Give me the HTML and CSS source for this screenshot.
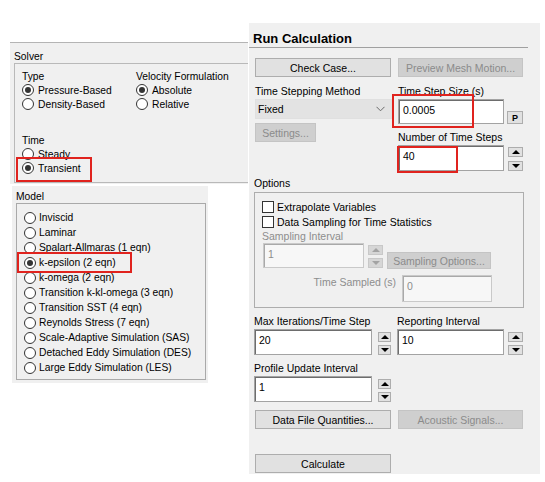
FILE: index.html
```html
<!DOCTYPE html>
<html>
<head>
<meta charset="utf-8">
<title>Run Calculation</title>
<link rel="stylesheet" href="styles.css">
</head>
<body>
<div class="canvas">

  <section class="panel solver">
    <div class="cap">Solver</div>
    <div class="group solver-group">
      <div class="cols">
        <div class="col col-type">
          <div class="lbl">Type</div>
          <div class="opt"><span class="rb on"></span>Pressure-Based</div>
          <div class="opt"><span class="rb"></span>Density-Based</div>
        </div>
        <div class="col">
          <div class="lbl">Velocity Formulation</div>
          <div class="opt"><span class="rb on"></span>Absolute</div>
          <div class="opt"><span class="rb"></span>Relative</div>
        </div>
      </div>
      <div class="lbl time-lbl">Time</div>
      <div class="opt"><span class="rb"></span>Steady</div>
      <div class="opt"><span class="rb on"></span>Transient</div>
    </div>
    <div class="mark mark-transient"></div>
  </section>

  <section class="panel model">
    <div class="cap">Model</div>
    <div class="group model-group">
      <div class="opt"><span class="rb"></span>Inviscid</div>
      <div class="opt"><span class="rb"></span>Laminar</div>
      <div class="opt"><span class="rb"></span>Spalart-Allmaras (1 eqn)</div>
      <div class="opt"><span class="rb on"></span>k-epsilon (2 eqn)</div>
      <div class="opt"><span class="rb"></span>k-omega (2 eqn)</div>
      <div class="opt"><span class="rb"></span>Transition k-kl-omega (3 eqn)</div>
      <div class="opt"><span class="rb"></span>Transition SST (4 eqn)</div>
      <div class="opt"><span class="rb"></span>Reynolds Stress (7 eqn)</div>
      <div class="opt"><span class="rb"></span>Scale-Adaptive Simulation (SAS)</div>
      <div class="opt"><span class="rb"></span>Detached Eddy Simulation (DES)</div>
      <div class="opt"><span class="rb"></span>Large Eddy Simulation (LES)</div>
    </div>
    <div class="mark mark-keps"></div>
  </section>

  <section class="panel rc">
    <h1 class="rc-title">Run Calculation</h1>
    <div class="rc-body">
      <div class="btnrow top-btns">
        <div class="btn">Check Case...</div>
        <div class="btn dis">Preview Mesh Motion...</div>
      </div>

      <div class="pair">
        <div class="pcol">
          <div class="lbl">Time Stepping Method</div>
          <div class="select"><span>Fixed</span>
            <svg class="chev" width="9" height="6" viewBox="0 0 9 6"><polyline points="0.5,0.8 4.5,4.8 8.5,0.8" fill="none" stroke="#6a6a6a" stroke-width="1"/></svg>
          </div>
          <div class="btn dis settings">Settings...</div>
        </div>
        <div class="pcol">
          <div class="lbl">Time Step Size (s)</div>
          <div class="frow">
            <div class="inp w106 h25">0.0005</div>
            <div class="btn pbtn">P</div>
          </div>
          <div class="lbl gap7">Number of Time Steps</div>
          <div class="frow">
            <div class="inp w106 h26">40</div>
            <div class="spin s15 ml4"><span class="sb up"></span><span class="sb down"></span></div>
          </div>
        </div>
      </div>

      <div class="lbl opt-cap">Options</div>
      <div class="group options">
        <div class="chk"><span class="cb"></span>Extrapolate Variables</div>
        <div class="chk"><span class="cb"></span>Data Sampling for Time Statistics</div>
        <div class="lbl dis-t samp-lbl">Sampling Interval</div>
        <div class="samp">
          <div class="inp dinp samp-inp">1</div>
          <div class="spin s15 dspin samp-spin"><span class="sb up"></span><span class="sb down"></span></div>
          <div class="btn dis samp-btn">Sampling Options...</div>
        </div>
        <div class="tsrow">
          <div class="ts-lbl dis-t">Time Sampled (s)</div>
          <div class="inp dinp ts-inp">0</div>
        </div>
      </div>

      <div class="grid2">
        <div class="pcol">
          <div class="lbl">Max Iterations/Time Step</div>
          <div class="frow">
            <div class="inp w118 h26">20</div>
            <div class="spin s13 ml6"><span class="sb up"></span><span class="sb down"></span></div>
          </div>
          <div class="lbl gap7">Profile Update Interval</div>
          <div class="frow">
            <div class="inp w118 h26">1</div>
            <div class="spin s13 ml6"><span class="sb up"></span><span class="sb down"></span></div>
          </div>
        </div>
        <div class="pcol">
          <div class="lbl">Reporting Interval</div>
          <div class="frow">
            <div class="inp w107 h26">10</div>
            <div class="spin s15 ml4"><span class="sb up"></span><span class="sb down"></span></div>
          </div>
        </div>
      </div>

      <div class="btnrow data-btns">
        <div class="btn">Data File Quantities...</div>
        <div class="btn dis">Acoustic Signals...</div>
      </div>
      <div class="btn calc">Calculate</div>
    </div>
    <div class="mark mark-dt"></div>
    <div class="mark mark-n"></div>
  </section>

</div>
</body>
</html>
```

FILE: styles.css
```css
html, body {
  margin: 0;
  padding: 0;
  background: #ffffff;
}

body {
  font-family: "Liberation Sans", Arial, sans-serif;
  color: #000;
}

.canvas {
  position: relative;
  width: 545px;
  height: 482px;
  overflow: hidden;
}

.panel {
  position: absolute;
  background: #f0f0f0;
  box-sizing: border-box;
}

.group {
  box-sizing: border-box;
  border: 1px solid #b9b9b9;
}

.lbl {
  line-height: 13px;
  white-space: nowrap;
}

/* radio options */
.opt {
  display: flex;
  align-items: center;
  white-space: nowrap;
}

.rb {
  position: relative;
  box-sizing: border-box;
  width: 12px;
  height: 12px;
  border: 1px solid #333;
  border-radius: 50%;
  background: #fff;
  flex: none;
}

.rb.on::after {
  content: "";
  position: absolute;
  left: 2px;
  top: 2px;
  width: 6px;
  height: 6px;
  border-radius: 50%;
  background: #333;
}

/* red highlight marks */
.mark {
  position: absolute;
  box-sizing: border-box;
  border: 2px solid #e0231e;
}

/* ---------- Solver ---------- */
.solver {
  left: 10px;
  top: 42px;
  width: 238px;
  height: 142px;
  border-top: 1px solid #b4b4b4;
  font-size: 10.3px;
}

.solver .cap {
  padding: 7px 0 0 4px;
  line-height: 13px;
}

.solver-group {
  margin-left: 4px;
  height: 120px;
  border-right: none;
  padding: 7px 0 0 7px;
}

.solver-group .lbl {
  line-height: 12px;
}

.cols {
  display: grid;
  grid-template-columns: 114px 1fr;
}

.solver-group .opt {
  height: 14px;
  gap: 4px;
}

.solver-group .time-lbl {
  margin-top: 24px;
}

.mark-transient {
  left: 6px;
  top: 114px;
  width: 76px;
  height: 25px;
}

/* ---------- Model ---------- */
.model {
  left: 12px;
  top: 186px;
  width: 196px;
  height: 197px;
  font-size: 10.3px;
}

.model .cap {
  padding: 4px 0 0 4px;
  line-height: 13px;
}

.model-group {
  margin-left: 4px;
  width: 190px;
  height: 177px;
  border-color: #a9a9a9;
  padding: 6px 0 0 7px;
}

.model-group .opt {
  height: 15px;
  gap: 3px;
}

.mark-keps {
  left: 5px;
  top: 66px;
  width: 115px;
  height: 21px;
}

/* ---------- Run Calculation ---------- */
.rc {
  left: 249px;
  top: 23px;
  width: 291px;
  height: 451px;
  font-size: 10.5px;
}

.rc-title {
  margin: 0;
  box-sizing: border-box;
  width: 279px;
  padding: 7px 0 0 4px;
  font-size: 13px;
  font-weight: bold;
  line-height: 17px;
  border-bottom: 1px solid #a0a0a0;
}

.rc-body {
  padding-left: 6px;
}

.btnrow {
  display: grid;
  grid-template-columns: 136px 125px;
  column-gap: 7px;
}

.top-btns {
  margin-top: 10px;
}

.btn {
  box-sizing: border-box;
  height: 19px;
  border: 1px solid #adadad;
  background: #e1e1e1;
  display: flex;
  align-items: center;
  justify-content: center;
  white-space: nowrap;
}

.btn.dis {
  background: #cfcfcf;
  border-color: #c4c4c4;
  color: #8b8b8b;
}

.pair {
  display: grid;
  grid-template-columns: 136px 125px;
  column-gap: 7px;
  margin-top: 8px;
}

.pcol {
  display: flex;
  flex-direction: column;
  align-items: flex-start;
}

.select {
  box-sizing: border-box;
  margin-top: 1px;
  width: 137px;
  height: 20px;
  background: #e3e3e3;
  border: 1px solid #e0e0e0;
  display: flex;
  align-items: center;
  justify-content: space-between;
  padding: 0 6px 0 2px;
}

.chev {
  display: block;
}

.settings {
  margin-top: 4px;
  width: 61px;
}

.frow {
  display: flex;
  align-items: flex-start;
  margin-top: 1px;
}

.gap7 {
  margin-top: 7px;
}

.inp {
  box-sizing: border-box;
  background: #fff;
  border: 1px solid #a3a3a3;
  box-shadow: inset 1px 1px 0 #6d6d6d;
  padding: 3px 0 0 4px;
  line-height: 14px;
  white-space: nowrap;
}

.w106 { width: 106px; }
.w107 { width: 107px; }
.w118 { width: 118px; }
.h25 { height: 25px; }
.h26 { height: 26px; }

.pbtn {
  width: 16px;
  height: 13px;
  margin-left: 3px;
  margin-top: 12px;
  font-size: 9px;
  font-weight: bold;
}

.spin {
  display: flex;
  flex-direction: column;
  justify-content: space-between;
  height: 24px;
  margin-top: 2px;
}

.s15 { width: 15px; }
.s13 { width: 13px; }
.ml4 { margin-left: 4px; }
.ml6 { margin-left: 6px; }

.sb {
  position: relative;
  box-sizing: border-box;
  height: 10px;
  border: 1px solid #adadad;
  background: #e1e1e1;
}

.sb::after {
  content: "";
  position: absolute;
  left: 50%;
  top: 2px;
  margin-left: -4px;
  width: 0;
  height: 0;
  border-left: 4px solid transparent;
  border-right: 4px solid transparent;
}

.sb.up::after {
  border-bottom: 4px solid #000;
}

.sb.down::after {
  border-top: 4px solid #000;
}

.dspin .sb {
  background: #d6d6d6;
  border-color: #c8c8c8;
}

.dspin .sb.up::after {
  border-bottom-color: #a3a3a3;
}

.dspin .sb.down::after {
  border-top-color: #a3a3a3;
}

.opt-cap {
  margin-top: 6px;
  margin-left: -1px;
}

.options {
  margin-top: 2px;
  margin-left: -1px;
  width: 270px;
  height: 116px;
  border-color: #adadad;
  padding: 6px 0 0 7px;
}

.chk {
  display: flex;
  align-items: center;
  gap: 3px;
  height: 15px;
  white-space: nowrap;
}

.cb {
  box-sizing: border-box;
  width: 12px;
  height: 12px;
  border: 1px solid #333;
  background: #fff;
  flex: none;
}

.dis-t {
  color: #8d8d8d;
}

.samp-lbl {
  line-height: 14px;
}

.samp {
  display: flex;
  align-items: flex-start;
}

.dinp {
  background: #f7f7f7;
  border-color: #c9c9c9;
  box-shadow: inset 1px 1px 0 #a9a9a9;
  color: #8d8d8d;
}

.samp-inp {
  margin-left: 1px;
  width: 101px;
  height: 25px;
}

.samp-spin {
  margin-left: 4px;
  height: 23px;
}

.samp-btn {
  margin-left: 4px;
  margin-top: 9px;
  width: 104px;
  height: 17px;
}

.tsrow {
  display: flex;
  align-items: flex-start;
  margin-top: 6px;
}

.ts-lbl {
  width: 134px;
  text-align: right;
  line-height: 14px;
  white-space: nowrap;
}

.ts-inp {
  margin-left: 6px;
  width: 90px;
  height: 27px;
}

.grid2 {
  display: grid;
  grid-template-columns: 143px 127px;
  margin-top: 7px;
  margin-left: -1px;
}

.grid2 .spin {
  margin-top: 3px;
  height: 23px;
}

.data-btns {
  margin-top: 8px;
}

.calc {
  margin-top: 25px;
  width: 136px;
}

.mark-dt {
  left: 143px;
  top: 71px;
  width: 82px;
  height: 34px;
}

.mark-n {
  left: 148px;
  top: 123px;
  width: 61px;
  height: 27px;
}
```
